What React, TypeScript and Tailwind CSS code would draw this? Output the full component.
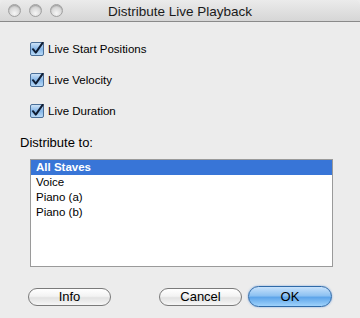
import React from "react";

const font = { fontFamily: '"Liberation Sans", Arial, sans-serif' };

function TrafficLight() {
  return (
    <div className="h-[13px] w-[13px] rounded-full border border-[#a0a0a0] bg-[radial-gradient(circle_at_50%_75%,#f6f6f6_0%,#d8d8d8_55%,#bcbcbc_100%)] shadow-[inset_0_1px_1px_rgba(0,0,0,0.2)]" />
  );
}

function AquaCheck({ label }: { label: string }) {
  return (
    <label className="flex h-[16px] items-center gap-[4px] text-[11.5px] leading-[16px] text-black">
      <svg width="14" height="14" viewBox="0 0 14 14">
        <defs>
          <linearGradient id="cb" x1="0" y1="0" x2="0" y2="1">
            <stop offset="0" stopColor="#d3e6f8" />
            <stop offset="0.5" stopColor="#85b6e8" />
            <stop offset="1" stopColor="#bcdcf8" />
          </linearGradient>
        </defs>
        <rect x="0.5" y="0.5" width="13" height="13" rx="1.5" fill="url(#cb)" stroke="#4a6f98" />
        <path d="M3 7.2 L5.8 10.6 L12.8 0.6" fill="none" stroke="#0f1d33" strokeWidth="2" strokeLinecap="round" strokeLinejoin="round" />
      </svg>
      <span>{label}</span>
    </label>
  );
}

function PillButton({ label, primary }: { label: string; primary?: boolean }) {
  if (primary) {
    return (
      <button className="flex h-[21px] w-[84px] items-center justify-center rounded-full border border-[#2f6aa8] bg-[linear-gradient(to_bottom,#c8e2fb_0%,#8ec2f2_45%,#5ea5ea_55%,#9fd2fb_100%)] text-[13px] leading-[16px] text-black shadow-[0_0_2px_rgba(60,130,220,0.7)]">
        OK
      </button>
    );
  }
  return (
    <button className="flex h-[18px] w-[83px] items-center justify-center rounded-full border border-[#7a7a7a] bg-[linear-gradient(to_bottom,#ffffff_0%,#f3f3f3_45%,#e2e2e2_55%,#f6f6f6_100%)] text-[13px] leading-[16px] text-black">
      {label}
    </button>
  );
}

export default function App() {
  const rows = ["All Staves", "Voice", "Piano (a)", "Piano (b)"];
  return (
    <div className="flex h-[318px] w-[360px] flex-col bg-[#ececec]" style={font}>
      <div className="relative flex h-[22px] items-center rounded-t-[5px] border-b border-[#8a8a8a] bg-[linear-gradient(to_bottom,#ebebeb,#d6d6d6)] px-[8px]">
        <div className="flex gap-[8px]">
          <TrafficLight />
          <TrafficLight />
          <TrafficLight />
        </div>
        <div className="absolute inset-x-0 top-[3px] text-center text-[13.5px] leading-[17px] text-[#1a1a1a]">
          Distribute Live Playback
        </div>
      </div>

      <div className="flex flex-col gap-[15px] pl-[30px] pt-[19px]">
        <AquaCheck label="Live Start Positions" />
        <AquaCheck label="Live Velocity" />
        <AquaCheck label="Live Duration" />
      </div>

      <div className="pl-[20px] pt-[16px] text-[13px] leading-[16px] text-black">Distribute to:</div>

      <div className="ml-[30px] mt-[8px] h-[108px] w-[303px] border border-[#9a9a9a] bg-white">
        {rows.map((r, i) => (
          <div
            key={r}
            className={
              i === 0
                ? "h-[15px] bg-[#3875d7] pl-[5px] text-[11.5px] leading-[15px] font-bold text-white"
                : "h-[15px] pl-[5px] text-[11.5px] leading-[15px] text-black"
            }
          >
            {r}
          </div>
        ))}
      </div>

      <div className="mt-[19px] flex items-center pl-[28px] pr-[28px]">
        <PillButton label="Info" />
        <div className="ml-auto flex items-center gap-[6px]">
          <PillButton label="Cancel" />
          <PillButton label="OK" primary />
        </div>
      </div>
    </div>
  );
}
